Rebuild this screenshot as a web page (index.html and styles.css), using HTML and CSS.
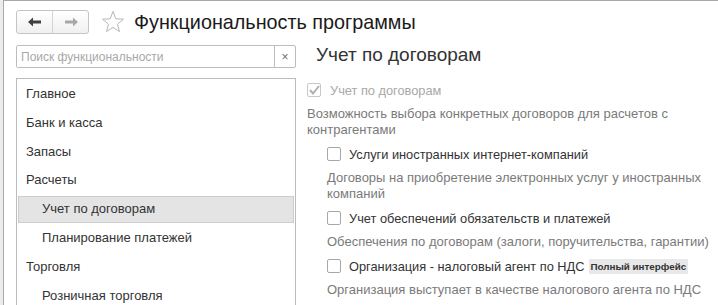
FILE: index.html
```html
<!DOCTYPE html>
<html lang="ru">
<head>
    <meta charset="UTF-8">
    <title>Функциональность программы</title>
    <link rel="stylesheet" href="styles.css">
</head>
<body>
    <div class="window">
        <div class="toolbar">
            <div class="nav-buttons">
                <button class="nav-btn" type="button">
                    <svg width="14" height="10" viewBox="0 0 14 10"><path d="M0 5 L5 0.5 L5 3.5 L13 3.5 L13 6.5 L5 6.5 L5 9.5 Z" fill="#404040"/></svg>
                </button>
                <button class="nav-btn" type="button">
                    <svg width="14" height="10" viewBox="0 0 14 10"><path d="M14 5 L9 0.5 L9 3.5 L1 3.5 L1 6.5 L9 6.5 L9 9.5 Z" fill="#a8a8a8"/></svg>
                </button>
            </div>
            <svg class="star" width="24" height="24" viewBox="0 0 24 24"><path d="M12 1.5 L14.8 8.8 L22.5 9.2 L16.5 14.1 L18.5 21.6 L12 17.4 L5.5 21.6 L7.5 14.1 L1.5 9.2 L9.2 8.8 Z" fill="none" stroke="#b8b8b8" stroke-width="1"/></svg>
            <h1 class="title">Функциональность программы</h1>
        </div>

        <div class="content">
            <div class="sidebar">
                <div class="search">
                    <input type="text" placeholder="Поиск функциональности">
                    <span class="search-clear">×</span>
                </div>
                <ul class="sections">
                    <li>Главное</li>
                    <li>Банк и касса</li>
                    <li>Запасы</li>
                    <li>Расчеты</li>
                    <li class="child selected">Учет по договорам</li>
                    <li class="child">Планирование платежей</li>
                    <li>Торговля</li>
                    <li class="child">Розничная торговля</li>
                </ul>
            </div>

            <div class="details">
                <h2>Учет по договорам</h2>

                <label class="option disabled">
                    <span class="box checked">
                        <svg width="11" height="10" viewBox="0 0 11 10"><path d="M1 5 L4 8.5 L10 1" fill="none" stroke="#b0b0b0" stroke-width="2"/></svg>
                    </span>
                    Учет по договорам
                </label>
                <p class="hint">Возможность выбора конкретных договоров для расчетов с контрагентами</p>

                <div class="nested">
                    <label class="option">
                        <span class="box"></span>
                        Услуги иностранных интернет-компаний
                    </label>
                    <p class="hint">Договоры на приобретение электронных услуг у иностранных компаний</p>

                    <label class="option">
                        <span class="box"></span>
                        Учет обеспечений обязательств и платежей
                    </label>
                    <p class="hint">Обеспечения по договорам (залоги, поручительства, гарантии)</p>

                    <label class="option">
                        <span class="box"></span>
                        Организация - налоговый агент по НДС
                        <span class="badge">Полный интерфейс</span>
                    </label>
                    <p class="hint">Организация выступает в качестве налогового агента по НДС</p>
                </div>
            </div>
        </div>
    </div>
</body>
</html>
```

FILE: styles.css
```css
body {
    margin: 0;
    font-family: "Liberation Sans", Arial, sans-serif;
    background: #fff;
    color: #333;
    overflow: hidden;
}

.window {
    height: 305px;
    border-top: 1px solid #a8a8a8;
    border-left: 1px solid #a8a8a8;
    margin-left: 3px;
    box-shadow: -3px 0 0 #ececec;
    padding-left: 12px;
    box-sizing: border-box;
    overflow: hidden;
}

.toolbar {
    display: flex;
    align-items: center;
    margin-top: 9px;
    height: 24px;
}

.nav-buttons {
    display: flex;
    width: 73px;
    height: 24px;
    box-sizing: border-box;
    border: 1px solid #c4c4c4;
    border-radius: 3px;
    background: linear-gradient(#ffffff, #f0f0f0);
}

.nav-btn {
    flex: 1;
    border: none;
    background: none;
    padding: 0;
    display: flex;
    align-items: center;
    justify-content: center;
}

.nav-btn + .nav-btn {
    border-left: 1px solid #d4d4d4;
}

.star {
    margin-left: 12px;
}

.title {
    margin: 0 0 0 9px;
    font-size: 19.8px;
    font-weight: normal;
    color: #1a1a1a;
}

.content {
    display: flex;
    margin-top: 11px;
}

.sidebar {
    width: 280px;
    flex-shrink: 0;
}

.search {
    display: flex;
    height: 23px;
    box-sizing: border-box;
    border: 1px solid #bcbcbc;
    border-radius: 2px;
}

.search input {
    flex: 1;
    border: none;
    outline: none;
    padding: 0 4px;
    font-family: inherit;
    font-size: 12px;
    color: #333;
}

.search input::placeholder {
    color: #a8a8a8;
}

.search-clear {
    width: 20px;
    border-left: 1px solid #bcbcbc;
    display: flex;
    align-items: center;
    justify-content: center;
    font-size: 12px;
    color: #707070;
}

.sections {
    list-style: none;
    margin: 10px 0 0;
    padding: 1px 1px 0;
    border: 1px solid #bcbcbc;
    border-bottom: none;
    height: 240px;
    box-sizing: border-box;
}

.sections li {
    height: 28.8px;
    line-height: 28.8px;
    padding-left: 8px;
    font-size: 13px;
    color: #333;
    box-sizing: border-box;
}

.sections li.child {
    padding-left: 24px;
}

.sections li.selected {
    background: #e4e4e4;
    border: 1px solid #cdcdcd;
    line-height: 24.8px;
    height: 26.8px;
    margin: 1px 0;
    padding-left: 23px;
}

.details {
    margin-left: 11px;
    flex: 1;
    min-width: 0;
}

.details h2 {
    margin: -1px 0 0 9px;
    font-size: 19px;
    font-weight: normal;
    color: #333;
    line-height: 22px;
}

.option {
    display: flex;
    align-items: center;
    gap: 8px;
    font-size: 12.8px;
    color: #333;
    height: 16px;
    margin-top: 8px;
    white-space: nowrap;
}

.details h2 + .option {
    margin-top: 16px;
}

.option.disabled {
    color: #a8a8a8;
}

.box {
    width: 12px;
    height: 12px;
    border: 1px solid #a8a8a8;
    border-radius: 2px;
    background: #fff;
    display: flex;
    align-items: center;
    justify-content: center;
    flex-shrink: 0;
}

.box.checked {
    border-color: #c8c8c8;
}

.option.disabled .box {
    margin-right: 1px;
}

.badge {
    margin-left: -4px;
    background: #e8e8e8;
    color: #333;
    font-size: 9.8px;
    font-weight: bold;
    padding: 2px 2px;
}

.hint {
    margin: 8px 0 0;
    font-size: 13px;
    line-height: 16px;
    color: #7a7a7a;
}

.nested {
    padding-left: 20px;
    margin-top: 4px;
}
```
